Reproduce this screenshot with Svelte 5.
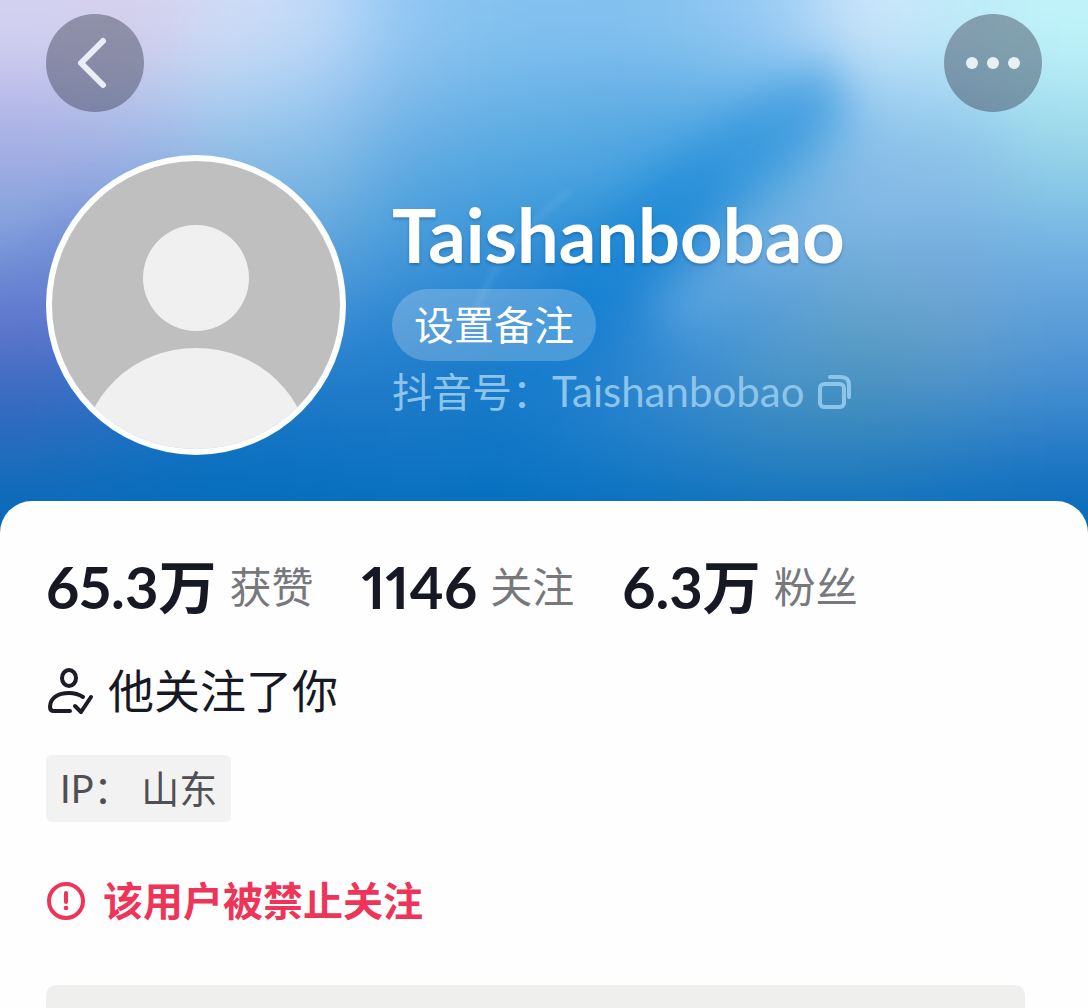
<script lang="ts">
  interface Stat {
    value: string;
    label: string;
  }

  const name = 'Taishanbobao';
  const douyinId = 'Taishanbobao';

  const stats: Stat[] = [
    { value: '65.3万', label: '获赞' },
    { value: '1146', label: '关注' },
    { value: '6.3万', label: '粉丝' },
  ];

  // cover artwork: coarse colour grid, blurred into a soft wash
  const cellW = 91;
  const cellH = 72;
  const cover: string[][] = [
    ['#d4d2f0', '#d6d0ec', '#cfdcf6', '#c0daf8', '#90c6f2', '#84c2f0', '#82c0f0', '#88c4f0', '#9cccf4', '#cce6fa', '#c0eaf8', '#c0f4fa'],
    ['#b4b8e8', '#b2c2ea', '#a8cef0', '#98c6f0', '#78b6e8', '#68b2e6', '#62aee4', '#5eace4', '#60b0e6', '#94c8f0', '#9cd0f0', '#a6e0ee'],
    ['#98a8e0', '#8fa8e0', '#80b4e0', '#7cb8e2', '#58a6e0', '#4ca4de', '#48a2de', '#3a9cde', '#58aae0', '#84bae4', '#86bee4', '#8ccce6'],
    ['#78a0da', '#6c9cda', '#5ea4dc', '#5ca2dc', '#4298d8', '#3690d6', '#2388d4', '#2a8ad4', '#68a8de', '#76b0de', '#74ace0', '#70b0e2'],
    ['#5c78cc', '#4f80d0', '#4090d2', '#388cd4', '#2a84d2', '#2080ce', '#187cce', '#4096da', '#589ed4', '#609fc6', '#68a0cc', '#5c9cd8'],
    ['#3a68c0', '#2a70c4', '#2078c6', '#1c78c8', '#1c7ac8', '#187ac8', '#2482d0', '#3888cc', '#4290c4', '#4690be', '#4890c8', '#408cd0'],
    ['#186ebc', '#0e70be', '#0a70c0', '#0c72c2', '#1074c4', '#0c74c4', '#1478c6', '#1c7cc4', '#267ec0', '#267ebe', '#2078c0', '#1c74c2'],
    ['#0068b8', '#0068b8', '#006aba', '#006aba', '#006aba', '#006aba', '#006aba', '#006aba', '#006aba', '#006aba', '#006aba', '#0068b8'],
  ];
</script>

<div class="page">
  <header class="hero">
    <svg class="cover" viewBox="0 0 1088 532" preserveAspectRatio="none" aria-hidden="true">
      <defs>
        <filter id="wash" x="-20%" y="-20%" width="140%" height="140%" color-interpolation-filters="sRGB">
          <feGaussianBlur stdDeviation="38" />
        </filter>
        <filter id="streak" x="-40%" y="-40%" width="180%" height="180%" color-interpolation-filters="sRGB">
          <feGaussianBlur stdDeviation="20" />
        </filter>
        <filter id="thin" x="-20%" y="-20%" width="140%" height="140%" color-interpolation-filters="sRGB">
          <feGaussianBlur stdDeviation="3" />
        </filter>
      </defs>
      <g filter="url(#wash)">
        {#each cover as row, r}
          {#each row as color, c}
            <rect
              x={c === 0 ? -120 : c * cellW}
              y={r === 0 ? -120 : r * cellH}
              width={c === 0 || c === 11 ? cellW + 120 : cellW + 1}
              height={r === 0 || r === 7 ? cellH + 120 : cellH + 1}
              fill={color}
            />
          {/each}
        {/each}
      </g>
      <path d="M-20 270 90 190V330L-20 360Z" fill="#6468cc" opacity=".25" filter="url(#streak)" />
      <path d="M830 60 C740 100 630 180 570 270 L490 420 L590 340 C650 250 740 200 850 120 Z" fill="#0c80d4" opacity=".4" filter="url(#streak)" />
      <path d="M1000 140 C850 160 740 210 650 310 L700 330 C780 250 900 200 1000 190 Z" fill="#8cbeea" opacity=".35" filter="url(#streak)" />
      <path d="M570 190 C520 230 485 270 470 330" fill="none" stroke="#8cc4ee" stroke-width="4" opacity=".25" filter="url(#thin)" />
    </svg>

    <nav class="topbar">
      <button class="round" aria-label="返回">
        <svg width="98" height="98" viewBox="0 0 98 98" aria-hidden="true">
          <path d="M57 27 35 49 57 71" fill="none" stroke="#e9eef6" stroke-width="6" stroke-linecap="round" stroke-linejoin="round" />
        </svg>
      </button>
      <button class="round" aria-label="更多">
        <svg width="98" height="98" viewBox="0 0 98 98" fill="#e6f1f6" aria-hidden="true">
          <circle cx="28" cy="49" r="6" />
          <circle cx="49" cy="49" r="6" />
          <circle cx="70" cy="49" r="6" />
        </svg>
      </button>
    </nav>

    <div class="profile">
      <svg class="avatar" viewBox="0 0 300 300" role="img" aria-label="头像">
        <defs>
          <clipPath id="face"><circle cx="150" cy="150" r="144" /></clipPath>
        </defs>
        <circle cx="150" cy="150" r="150" fill="#fdfefe" />
        <g clip-path="url(#face)">
          <rect width="300" height="300" fill="#bfbfbf" />
          <circle cx="150" cy="123" r="53" fill="#f0f0f0" />
          <ellipse cx="150" cy="302" rx="114" ry="109" fill="#f0f0f0" />
        </g>
      </svg>
      <div class="identity">
        <h1>{name}</h1>
        <button class="remark">设置备注</button>
        <p class="uid">
          <span>抖音号：<span class="handle">{douyinId}</span></span>
          <button class="copy" aria-label="复制抖音号">
            <svg width="36" height="36" viewBox="0 0 36 36" fill="none" stroke="currentColor" stroke-width="4" stroke-linecap="round" aria-hidden="true">
              <rect x="4" y="10" width="24" height="23" rx="4" />
              <path d="M14 3h11q8 0 8 8v12" />
            </svg>
          </button>
        </p>
      </div>
    </div>
  </header>

  <main class="card">
    <ul class="stats">
      {#each stats as stat}
        <li><strong>{stat.value}</strong><span>{stat.label}</span></li>
      {/each}
    </ul>

    <p class="relation">
      <svg width="48" height="48" viewBox="0 0 48 48" fill="none" stroke="#1c1c26" stroke-width="4" stroke-linecap="round" stroke-linejoin="round" aria-hidden="true">
        <ellipse cx="23" cy="11" rx="7" ry="8" />
        <path d="M24 44H8q-4 0-4-4C4 31 12 26 23 26q8 0 14 4" />
        <path d="m29 39 6 6 10-15" />
      </svg>
      他关注了你
    </p>

    <p class="ip">IP： 山东</p>

    <p class="warning">
      <svg width="40" height="40" viewBox="0 0 40 40" aria-hidden="true">
        <circle cx="20" cy="20" r="17" fill="none" stroke="#ee3459" stroke-width="4" />
        <path d="M20 12v9" stroke="#ee3459" stroke-width="4" stroke-linecap="round" />
        <circle cx="20" cy="27" r="2.3" fill="#ee3459" />
      </svg>
      该用户被禁止关注
    </p>

    <div class="panel"></div>
  </main>
</div>

<style>
  :global(body) {
    margin: 0;
    background: #fefefe;
  }

  .page {
    display: flex;
    flex-direction: column;
    min-height: 100vh;
    font-family: Lato, 'Noto Sans CJK SC', sans-serif;
    color: #161823;
  }

  h1,
  p,
  ul {
    margin: 0;
    padding: 0;
  }

  button {
    padding: 0;
    border: 0;
    background: none;
    color: inherit;
    font: inherit;
    cursor: pointer;
  }

  svg {
    display: block;
    flex: none;
  }

  .hero {
    position: relative;
    overflow: hidden;
    padding: 14px 46px 78px;
    background: #0068b8;
  }

  .cover {
    position: absolute;
    inset: 0;
    width: 100%;
    height: 100%;
  }

  .topbar,
  .profile {
    position: relative;
    display: flex;
  }

  .topbar {
    justify-content: space-between;
  }

  .round {
    width: 98px;
    height: 98px;
    border-radius: 50%;
    background: rgba(50, 55, 75, 0.42);
  }

  .profile {
    gap: 46px;
    margin-top: 43px;
  }

  .avatar {
    width: 300px;
    height: 300px;
  }

  .identity {
    display: flex;
    flex-direction: column;
    align-items: flex-start;
    padding-top: 40px;
    color: #fff;
  }

  h1 {
    font-size: 74px;
    line-height: 80px;
    font-weight: 700;
    text-shadow: 0 2px 3px rgba(0, 40, 90, 0.3);
  }

  .remark {
    height: 72px;
    margin-top: 14px;
    padding: 0 22px;
    border-radius: 36px;
    background: rgba(255, 255, 255, 0.22);
    font-size: 40px;
    line-height: 72px;
  }

  .uid {
    display: flex;
    align-items: center;
    gap: 12px;
    color: #8cc4ea;
    font-size: 40px;
    line-height: 60px;
  }

  .handle {
    font-size: 42px;
  }

  .card {
    position: relative;
    display: flex;
    flex: 1;
    flex-direction: column;
    align-items: flex-start;
    margin-top: -32px;
    padding: 54px 46px 0;
    border-radius: 32px 32px 0 0;
    background: #fefefe;
  }

  .stats {
    display: flex;
    gap: 48px;
    list-style: none;
  }

  .stats li {
    display: flex;
    align-items: center;
    gap: 13px;
    height: 64px;
    line-height: 64px;
  }

  .stats strong {
    font-size: 58px;
    font-weight: 700;
    font-variant-numeric: proportional-nums;
  }

  .stats span {
    color: #77787c;
    font-size: 42px;
  }

  .relation {
    display: flex;
    align-items: center;
    gap: 14px;
    margin-top: 40px;
    font-size: 46px;
    line-height: 64px;
  }

  .ip {
    margin-top: 32px;
    padding: 0 14px;
    border-radius: 6px;
    background: #f2f2f2;
    color: #505054;
    font-size: 38px;
    line-height: 67px;
  }

  .warning {
    display: flex;
    align-items: center;
    gap: 17px;
    margin-top: 49px;
    color: #ee3459;
    font-size: 40px;
    font-weight: 700;
    line-height: 60px;
  }

  .panel {
    flex: 1;
    align-self: stretch;
    min-height: 23px;
    margin: 54px 17px 0 0;
    border-radius: 10px 10px 0 0;
    background: #efefee;
  }
</style>
